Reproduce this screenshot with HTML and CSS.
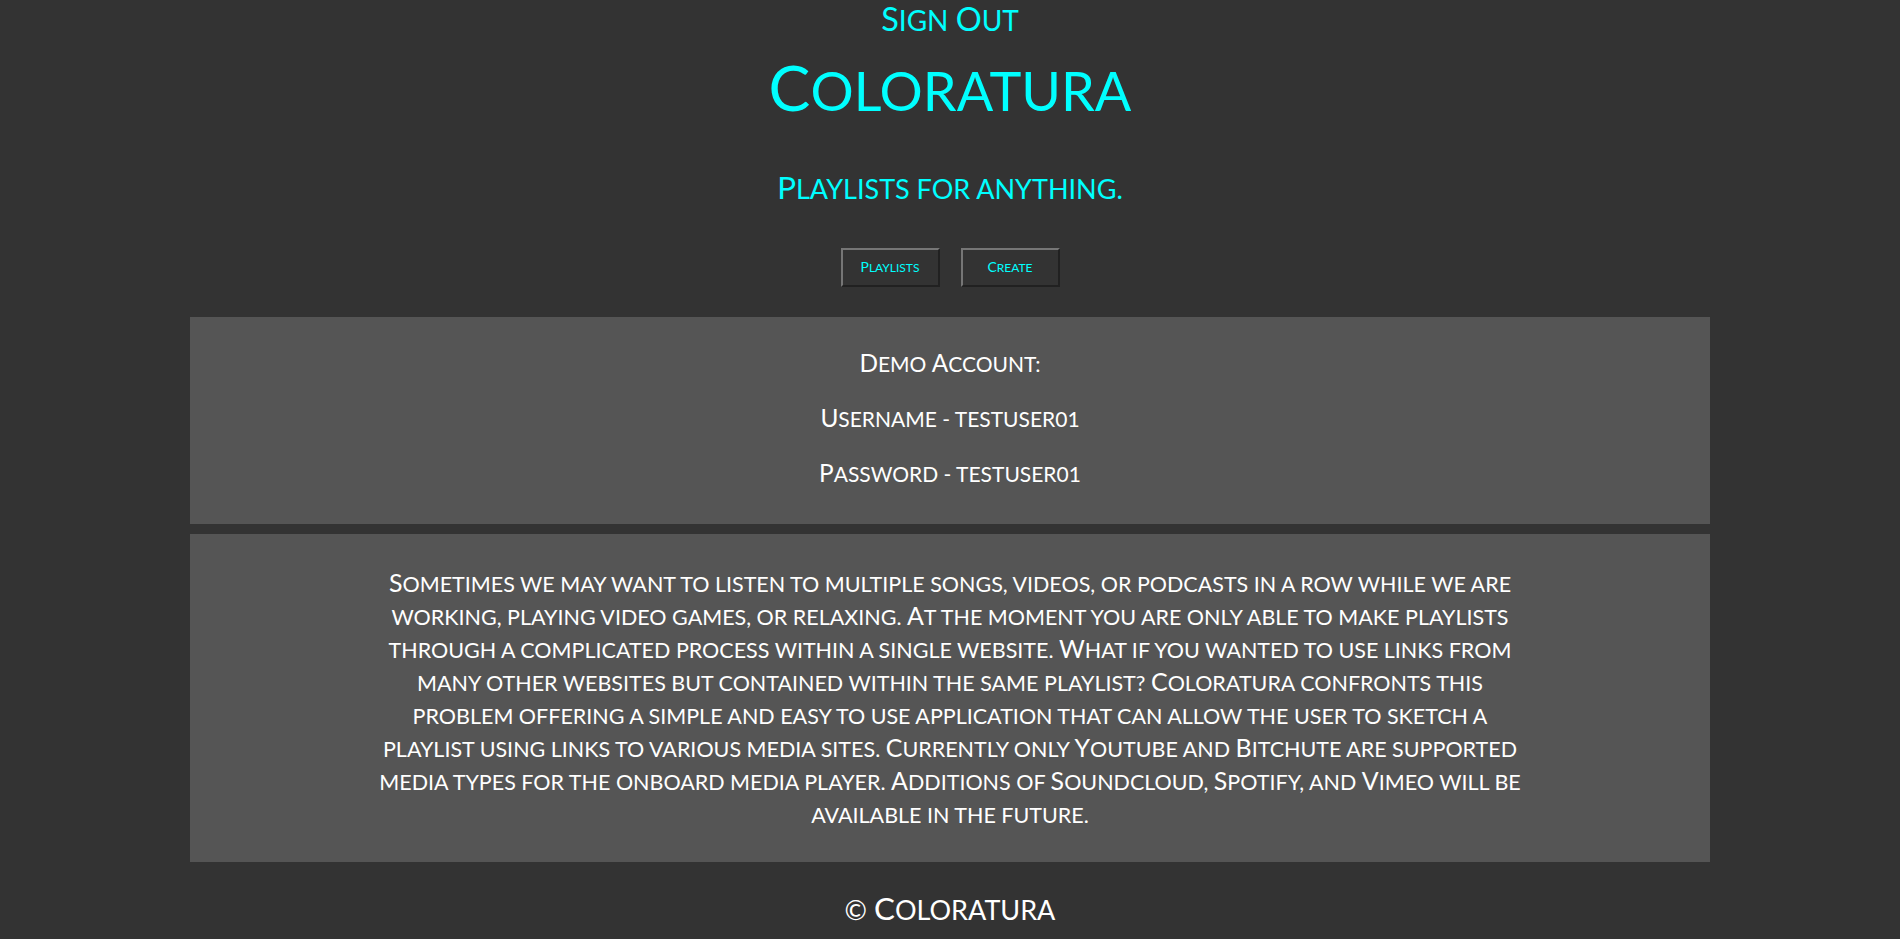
FILE: index.html
```html
<!DOCTYPE html>
<html lang="en">
<head>
<meta charset="utf-8">
<title>Coloratura</title>
<link rel="stylesheet" href="styles.css">
</head>
<body>
<header class="header">
  <a class="signout" href="#"><span class="cap">S</span>ign <span class="cap">O</span>ut</a>
  <h1 class="title"><span class="cap">C</span>oloratura</h1>
  <h2 class="tagline"><span class="cap">P</span>laylists for anything.</h2>
  <nav class="nav">
    <button class="btn"><span class="cap">P</span>laylists</button>
    <button class="btn"><span class="cap">C</span>reate</button>
  </nav>
</header>
<main class="main">
  <section class="box demo">
    <p><span class="cap">D</span>emo <span class="cap">A</span>ccount:</p>
    <p><span class="cap">U</span>sername - testuser01</p>
    <p><span class="cap">P</span>assword - testuser01</p>
  </section>
  <section class="box about">
    <p><span class="cap">S</span>ometimes we may want to listen to multiple songs, videos, or podcasts in a row while we are working, playing video games, or relaxing. <span class="cap">A</span>t the moment you are only able to make playlists through a complicated process within a single website. <span class="cap">W</span>hat if you wanted to use links from many other websites but contained within the same playlist? <span class="cap">C</span>oloratura confronts this problem offering a simple and easy to use application that can allow the user to sketch a playlist using links to various media sites. <span class="cap">C</span>urrently only <span class="cap">Y</span>outube and <span class="cap">B</span>itchute are supported media types for the onboard media player. <span class="cap">A</span>dditions of <span class="cap">S</span>oundcloud, <span class="cap">S</span>potify, and <span class="cap">V</span>imeo will be available in the future.</p>
  </section>
</main>
<footer class="footer">© <span class="cap">C</span>oloratura</footer>
</body>
</html>
```

FILE: styles.css
```css
html, body {
  margin: 0;
  padding: 0;
}
body {
  background: #333333;
  color: #ffffff;
  font-family: "Lato", "Open Sans", sans-serif;
  text-transform: uppercase;
  text-align: center;
}
.cap {
  font-size: 1.16em;
  line-height: 1;
}
.header {
  display: flex;
  flex-direction: column;
  align-items: center;
}
.signout {
  display: block;
  color: #00ffff;
  text-decoration: none;
  font-size: 28px;
  line-height: 36px;
  margin-top: 2px;
}
.title {
  margin: 0;
  color: #00ffff;
  font-weight: normal;
  font-size: 54px;
  line-height: 64px;
  margin-top: 18px;
}
.tagline {
  margin: 0;
  color: #00ffff;
  font-weight: normal;
  font-size: 27px;
  line-height: 32px;
  margin-top: 49px;
}
.nav {
  display: flex;
  gap: 21px;
  margin-top: 43px;
}
.btn {
  background: #333333;
  color: #00ffff;
  border: 2px outset #767676;
  font-family: "Lato", "Open Sans", sans-serif;
  text-transform: uppercase;
  font-size: 12px;
  width: 99px;
  height: 39px;
  padding: 0;
}
.main {
  width: 80%;
  margin: 30px auto 0;
  display: flex;
  flex-direction: column;
  gap: 10px;
}
.box {
  background: #555555;
}
.demo p {
  margin: 0;
  font-size: 21px;
  line-height: 55px;
}
.demo {
  padding: 19px 0 23px;
}
.about {
  padding: 34px 0 30px;
}
.about p {
  width: 76.5%;
  margin: 0 auto;
  font-size: 21.5px;
  line-height: 33px;
}
.footer {
  font-size: 27px;
  line-height: 36px;
  padding: 30px 0 20px;
}
```
